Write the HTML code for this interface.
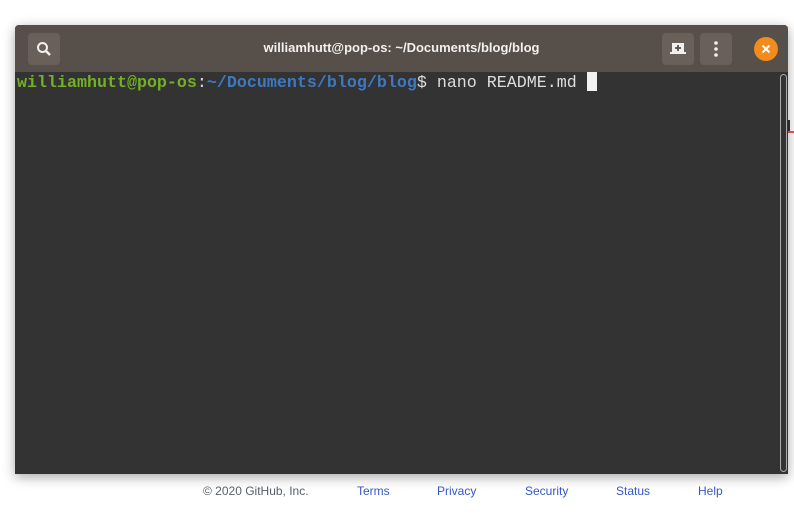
<!DOCTYPE html>
<html><head><style>
body{margin:0;width:794px;height:520px;background:#fff;position:relative;overflow:hidden;font-family:"Liberation Sans",sans-serif}
.win{position:absolute;left:15px;top:25px;width:773px;height:449px;background:#333;box-shadow:0 3px 12px rgba(0,0,0,.35);border-radius:4px 4px 0 0;overflow:hidden}
.tb{position:absolute;left:0;top:0;width:773px;height:47px;background:#574f4a}
.btn{position:absolute;top:8px;width:32px;height:32px;border-radius:4px;background:#686059}
.title{position:absolute;left:0;width:773px;top:15px;text-align:center;color:#f2f0ee;font-weight:bold;font-size:13px}
.term{position:absolute;left:2px;top:47px;font-family:"Liberation Mono",monospace;font-size:16.67px;color:#ddd;white-space:pre}
.g{color:#73b026;font-weight:bold}.b{color:#3d79c2;font-weight:bold}
.cur{display:inline-block;width:10px;height:19px;background:#f2f2f2;vertical-align:-4px}
.sb{position:absolute;left:765px;top:49px;width:5px;height:396px;border:1px solid #aaa;border-radius:4px}
.foot{position:absolute;top:484px;font-size:12px;color:#586069}
.foot a{color:#3558c8;text-decoration:none}
</style></head><body>
<div style="position:absolute;left:788px;top:120px;width:6px;height:12px;border-left:2px solid #333"></div>
<div style="position:absolute;left:788px;top:131px;width:6px;height:2px;background:#e55"></div>
<div class="win">
<div class="tb">
<div class="btn" style="left:13px"><svg width="32" height="32"><circle cx="14.5" cy="14.5" r="4.5" fill="none" stroke="#f2f0ee" stroke-width="2"/><line x1="18" y1="18" x2="22" y2="22" stroke="#f2f0ee" stroke-width="2.5"/></svg></div>
<div class="title">williamhutt@pop-os: ~/Documents/blog/blog</div>
<div class="btn" style="left:647px"><svg width="32" height="32"><rect x="10" y="10" width="12" height="10" fill="#f2f0ee"/><rect x="8" y="19" width="16" height="2" fill="#f2f0ee"/><path d="M16 12v6M13 15h6" stroke="#574f4a" stroke-width="1.8"/></svg></div>
<div class="btn" style="left:685px"><svg width="32" height="32"><circle cx="16" cy="10" r="1.8" fill="#f2f0ee"/><circle cx="16" cy="16" r="1.8" fill="#f2f0ee"/><circle cx="16" cy="22" r="1.8" fill="#f2f0ee"/></svg></div>
<div style="position:absolute;left:739px;top:12px;width:24px;height:24px;border-radius:50%;background:#f28a1c"><svg width="24" height="24"><path d="M8.5 8.5l7 7M15.5 8.5l-7 7" stroke="#fff" stroke-width="2"/></svg></div>
</div>
<div class="term"><span class="g">williamhutt@pop-os</span>:<span class="b">~/Documents/blog/blog</span>$ nano README.md <span class="cur"></span></div>
<div class="sb"></div>
</div>
<div class="foot" style="left:203px">© 2020 GitHub, Inc.</div>
<div class="foot" style="left:357px"><a>Terms</a></div>
<div class="foot" style="left:437px"><a>Privacy</a></div>
<div class="foot" style="left:525px"><a>Security</a></div>
<div class="foot" style="left:616px"><a>Status</a></div>
<div class="foot" style="left:698px"><a>Help</a></div>
</body></html>
